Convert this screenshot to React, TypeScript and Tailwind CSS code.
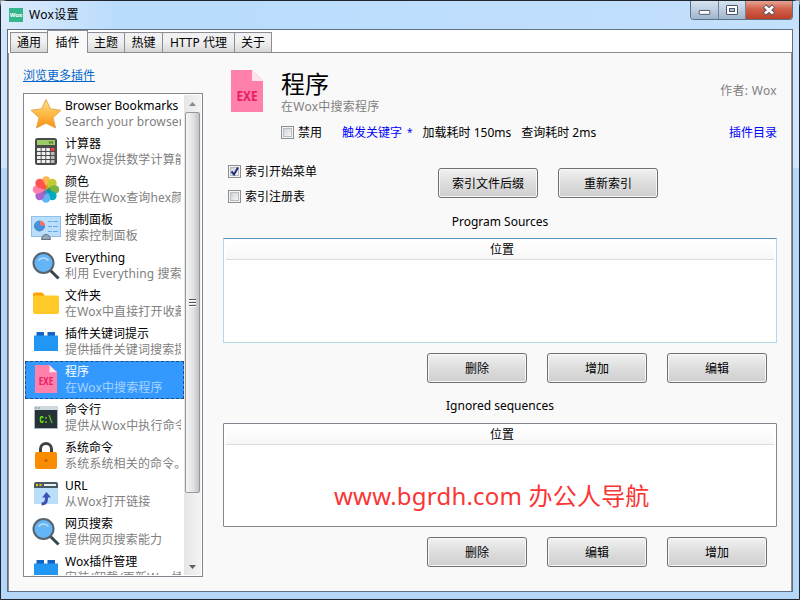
import clsx from "clsx";
import type { ReactNode } from "react";

const Star = () => (
  <svg viewBox="0 0 32 32" className="size-8">
    <defs>
      <linearGradient id="star" x1="0" y1="0" x2="0" y2="1">
        <stop offset="0" stopColor="#ffe08a" />
        <stop offset=".5" stopColor="#fdbb45" />
        <stop offset="1" stopColor="#f9900f" />
      </linearGradient>
    </defs>
    <path d="M16 1.5l4.4 9.3 10.600 1.500-8 7.300 2.600 10.400L16 25.200l-9.600 4.800L9 19.600 1 12.300l10.600-1.500z" fill="url(#star)" stroke="#e9a850" strokeWidth="1" strokeLinejoin="round" />
  </svg>
);

const Calculator = () => (
  <svg viewBox="0 0 32 32" className="size-8">
    <rect x="5" y="2" width="22" height="27" rx="2.500" fill="#4a4a4c" />
    <rect x="7" y="4" width="18" height="5" fill="#9ccc65" />
    <path d="M19 6.500h1.500M21.500 6.500H23" stroke="#33691e" strokeWidth="2" />
    {[12, 16, 20, 24].map((y) =>
      [7, 11.600, 16.200, 20.800].map((x) => (
        <rect key={`${x}-${y}`} x={x} y={y} width="3.700" height="3" rx=".5" fill={x > 20 ? (y === 12 ? "#f44336" : "#bdbdbd") : "#f0f0f0"} />
      ))
    )}
  </svg>
);

const petals = [
  { angle: 0, color: "#ffb74d" },
  { angle: 45, color: "#c0ca33" },
  { angle: 90, color: "#7cb342" },
  { angle: 135, color: "#00acc1" },
  { angle: 180, color: "#64b5f6" },
  { angle: 225, color: "#ab63d0" },
  { angle: 270, color: "#ff80ab" },
  { angle: 315, color: "#ff5252" },
];

const Colors = () => (
  <svg viewBox="0 0 32 32" className="size-8">
    {petals.map((p) => (
      <path key={p.angle} d="M16 15.500C13.500 12 11.700 9 11.700 6.500a4.300 4.300 0 0 1 8.600 0c0 2.500-1.800 5.500-4.300 9z" fill={p.color} transform={`rotate(${p.angle} 16 15.500)`} />
    ))}
    <path d="M16 15.500l4-2 1 2-1 3-4 2-3-2z" fill="#00796b" opacity=".4" />
    <path d="M16 15.500l-4-1 1-3 3-1 2 2z" fill="#f4511e" opacity=".5" />
  </svg>
);

const ControlPanel = () => (
  <svg viewBox="0 0 32 32" className="size-8">
    <rect x="1.500" y="4.500" width="29" height="20" fill="#bbdefb" stroke="#90bfe8" />
    <circle cx="9.500" cy="14" r="5" fill="#4591dc" stroke="#2b75bd" strokeWidth=".7" />
    <path d="M10 13.500V9a5 5 0 0 1 5 4.500z" fill="#ff6f60" />
    <path d="M18 9.500h4M18 14.500h4M18 19.500h4M23 9.500h5M23 14.500h5M23 19.500h5" stroke="#64a9e8" />
    <path d="M11.500 27.500c0-3 2-5 4.500-5s4.500 2 4.500 5z" fill="#9aa6b5" stroke="#60738a" />
  </svg>
);

const Magnifier = () => (
  <svg viewBox="0 0 32 32" className="size-8">
    <path d="M21 21l6.500 6.500" stroke="#37474f" strokeWidth="3" strokeLinecap="square" />
    <circle cx="13.500" cy="13" r="10" fill="#64b5f6" stroke="#57626b" strokeWidth="2" />
    <path d="M8.500 10.500c2.500-3.500 7.500-3.500 10 0" fill="none" stroke="#bbdefb" strokeWidth="1.500" />
  </svg>
);

const Folder = () => (
  <svg viewBox="0 0 32 32" className="size-8">
    <path d="M3 6.500q0-2 2-2h7l3 3v9H3z" fill="#ffa000" />
    <rect x="3" y="7.500" width="26" height="18.500" rx="2" fill="#ffca28" />
  </svg>
);

const Brick = () => (
  <svg viewBox="0 0 32 32" className="size-8">
    <path d="M6.500 6H14v4H6.500zM17.500 6h7.500v4h-7.500z" fill="#1565c0" />
    <path d="M4 9.500h24V25H4z" fill="#2196f3" />
  </svg>
);

const Exe = ({ className }: { className: string }) => (
  <svg viewBox="0 0 32 42" preserveAspectRatio="none" className={className}>
    <path d="M0 0h21l11 11v31H0z" fill="#ff80ab" />
    <path d="M21 0v11h11z" fill="#fce4ec" />
    <text x="16" y="30.500" textAnchor="middle" textLength="21" lengthAdjust="spacingAndGlyphs" fontSize="15" fontWeight="700" fontFamily="'Noto Sans', sans-serif" fill="#e91e63">
      EXE
    </text>
  </svg>
);

const Cmd = () => (
  <svg viewBox="0 0 32 32" className="size-8">
    <path d="M4.500 5h23v21.500h-23z" fill="#263238" stroke="#a9b8c0" />
    <path d="M4 4h24v4H4z" fill="#cfd8dc" />
    <path d="M5 6h2M8 6h2" stroke="#90a4ae" strokeWidth="1.500" />
    <text x="9.500" y="20.500" fontSize="10" fontWeight="700" textLength="13" lengthAdjust="spacingAndGlyphs" fontFamily="'Liberation Mono', monospace" fill="#76ff03">
      C:\
    </text>
  </svg>
);

const Lock = () => (
  <svg viewBox="0 0 32 32" className="size-8">
    <path d="M10.500 13V9a5.500 5.500 0 0 1 11 0v4" fill="none" stroke="#424242" strokeWidth="3" />
    <rect x="5" y="12" width="22" height="17" rx="2" fill="#fb8c00" />
    <circle cx="16" cy="20.500" r="1.500" fill="#c05f00" />
  </svg>
);

const UrlIcon = () => (
  <svg viewBox="0 0 32 32" className="size-8">
    <path d="M4 9h24v17H4z" fill="#bbdefb" />
    <path d="M4 10V6q0-2 2-2h20q2 0 2 2v4z" fill="#455a64" />
    <path d="M6 7h2M9.500 7h2" stroke="#ffc107" strokeWidth="2" />
    <path d="M14 6h12v2H14z" fill="#eceff1" />
    <path d="M11.500 26c3.500 0 5-2 5-5.500V18" fill="none" stroke="#3f51b5" strokeWidth="3" />
    <path d="M16.500 14l4.500 5.500h-9z" fill="#3f51b5" />
  </svg>
);

const plugins: { title: string; text: string; icon: ReactNode }[] = [
  { title: "Browser Bookmarks", text: "Search your browser", icon: <Star /> },
  { title: "计算器", text: "为Wox提供数学计算能", icon: <Calculator /> },
  { title: "颜色", text: "提供在Wox查询hex颜", icon: <Colors /> },
  { title: "控制面板", text: "搜索控制面板", icon: <ControlPanel /> },
  { title: "Everything", text: "利用 Everything 搜索", icon: <Magnifier /> },
  { title: "文件夹", text: "在Wox中直接打开收藏", icon: <Folder /> },
  { title: "插件关键词提示", text: "提供插件关键词搜索提", icon: <Brick /> },
  { title: "程序", text: "在Wox中搜索程序", icon: <Exe className="-mt-0.5 h-7 w-[22px]" /> },
  { title: "命令行", text: "提供从Wox中执行命令", icon: <Cmd /> },
  { title: "系统命令", text: "系统系统相关的命令。", icon: <Lock /> },
  { title: "URL", text: "从Wox打开链接", icon: <UrlIcon /> },
  { title: "网页搜索", text: "提供网页搜索能力", icon: <Magnifier /> },
  { title: "Wox插件管理", text: "安装/卸载/更新Wox插", icon: <Brick /> },
];

const tabs = [
  { label: "通用", width: "w-[37px]" },
  { label: "插件", width: "w-[41px]" },
  { label: "主题", width: "w-[37px]" },
  { label: "热键", width: "w-[38px]" },
  { label: "HTTP 代理", width: "w-[72px]" },
  { label: "关于", width: "w-[37px]" },
];

function TitleBar() {
  return (
    <header className="flex h-7 shrink-0 items-start bg-linear-to-r from-[#dcebfb] via-[#b9dcfd] via-15% to-[#c3e0fc] pl-2">
      <div className="mt-[7px] flex size-[14px] items-center justify-center bg-[#35b58c] text-[6px] font-bold tracking-tight text-white">Wox</div>
      <h1 className="mt-[5px] ml-[6px] text-[12px] leading-[18px] tracking-[0.3px]">Wox设置</h1>
      <div className="mr-[6px] ml-auto flex h-[19px] overflow-hidden rounded-b-[4px] border border-t-0 border-[#5c7087]">
        <button className="flex w-7 items-center justify-center border-r border-[#6e8299] bg-linear-to-b from-[#d5e2f0] via-[#c0d0e2] via-45% to-[#9fb5cc]">
          <svg viewBox="0 0 28 18" className="h-[18px] w-7">
            <rect x="8.500" y="9.500" width="11" height="4" rx=".5" fill="#fff" stroke="#4d5666" />
          </svg>
        </button>
        <button className="flex w-[27px] items-center justify-center border-r border-[#6e8299] bg-linear-to-b from-[#d5e2f0] via-[#c0d0e2] via-45% to-[#9fb5cc]">
          <svg viewBox="0 0 26 18" className="h-[18px] w-[26px]">
            <rect x="7.500" y="4.500" width="11" height="9" rx=".5" fill="#fff" stroke="#4d5666" />
            <rect x="10.500" y="7.500" width="5" height="3" fill="#a9bdd3" stroke="#4d5666" />
          </svg>
        </button>
        <button className="flex w-[46px] items-center justify-center bg-linear-to-b from-[#e5a494] via-[#d1604a] via-45% to-[#bd3f28]">
          <svg viewBox="0 0 46 18" className="h-[18px] w-[46px]">
            <path d="M18.500 5l9 8M27.500 5l-9 8" stroke="#51535f" strokeWidth="4.600" />
            <path d="M19 5.500l8 7M27 5.500l-8 7" stroke="#fff" strokeWidth="2.800" />
          </svg>
        </button>
      </div>
    </header>
  );
}

function Button({ children }: { children: ReactNode }) {
  return (
    <button className="h-[30px] w-[100px] rounded-[3px] border border-[#707070] bg-linear-to-b from-[#f2f2f2] from-0% via-[#dddddd] via-50% to-[#cfcfcf] pt-px text-center leading-[28px] shadow-[inset_0_0_0_1px_#f8f8f8]">
      {children}
    </button>
  );
}

function CheckBox({ label, checked = false }: { label: string; checked?: boolean }) {
  return (
    <label className="flex h-4 items-center">
      <span className="flex size-[13px] items-center justify-center border border-[#8e8f8f] bg-[#f4f4f4]">
        <span className="size-[9px] border border-[#b8bdc4] bg-linear-to-br from-[#cfd3d8] to-[#f6f6f6]">
          {checked && (
            <svg viewBox="0 0 9 9" className="-mt-px -ml-px size-[9px] overflow-visible">
              <path d="M1.500 4.500L4 7.500 8 .500" fill="none" stroke="#22307f" strokeWidth="2" />
            </svg>
          )}
        </span>
      </span>
      <span className="ml-1 pt-0.5 leading-4">{label}</span>
    </label>
  );
}

function Grid({ className }: { className: string }) {
  return (
    <div className={clsx("border bg-white px-[2px] pt-[2px]", className)}>
      <div className="h-[19px] border-b border-[#dcdcdc] bg-linear-to-b from-white to-[#f7f7f8] pl-1 text-center leading-[18px]">位置</div>
    </div>
  );
}

function PluginList() {
  return (
    <div className="flex h-[484px] w-[180px] border border-[#828790] bg-white p-px">
      <ul className="h-[480px] w-40 overflow-hidden">
        {plugins.map((p, i) => (
          <li key={p.title} className={clsx("flex h-[38px] items-center", i === 7 && "bg-[#3399ff] text-white outline-1 -outline-offset-1 outline-dashed outline-[#1a4f88]")}>
            <div className="ml-[5px] flex size-8 shrink-0 items-center justify-center">{p.icon}</div>
            <div className="ml-[3px] w-[116px] overflow-hidden whitespace-nowrap">
              <div className="h-4 leading-4">{p.title}</div>
              <div className={clsx("h-4 leading-4 tracking-[0.15px]", i === 7 ? "text-[#a9d3ff]" : "text-[#808080]")}>{p.text}</div>
            </div>
          </li>
        ))}
      </ul>
      <div className="flex w-[17px] flex-col bg-linear-to-r from-[#e6e6e6] to-[#f3f3f3]">
        <div className="flex h-[17px] items-center justify-center">
          <svg viewBox="0 0 7 4" className="h-1 w-[7px]"><path d="M0 4l3.500-4L7 4z" fill="#888" /></svg>
        </div>
        <div className="mx-px flex h-[381px] flex-col items-center justify-center gap-px rounded-[2px] border border-[#979797] bg-linear-to-r from-[#f5f5f5] via-[#e4e5e7] via-50% to-[#c2c3c8]">
          <i className="h-0.5 w-[7px] border-b border-white bg-[#555]" />
          <i className="h-0.5 w-[7px] border-b border-white bg-[#555]" />
          <i className="h-0.5 w-[7px] border-b border-white bg-[#555]" />
        </div>
        <div className="mt-auto flex h-[17px] items-center justify-center">
          <svg viewBox="0 0 7 4" className="h-1 w-[7px]"><path d="M0 0h7L3.500 4z" fill="#606060" /></svg>
        </div>
      </div>
    </div>
  );
}

function PluginDetails() {
  return (
    <main className="ml-5 w-[554px]">
      <div className="flex h-[90px] pl-2">
        <Exe className="mt-[17px] h-[42px] w-8" />
        <div className="ml-[18px] flex-1">
          <div className="mt-[15px] flex h-[47px] justify-between">
            <div>
              <h2 className="h-[31px] text-2xl leading-[32px]">程序</h2>
              <p className="h-4 leading-4 tracking-[0.25px] text-[#808080]">在Wox中搜索程序</p>
            </div>
            <span className="mt-[15px] leading-4 tracking-[0.3px] text-[#808080]">作者: Wox</span>
          </div>
          <div className="mt-[9px] flex h-4 leading-4 whitespace-nowrap">
            <CheckBox label="禁用" />
            <a className="ml-5 pt-px text-[#0000ff]">触发关键字</a>
            <a className="ml-[5px] text-[10px] text-[#0000ff]">*</a>
            <span className="ml-[10px] pt-px">加载耗时 150ms</span>
            <span className="ml-[10px] pt-px">查询耗时 2ms</span>
            <a className="ml-auto pt-px text-[#0000ff]">插件目录</a>
          </div>
        </div>
      </div>
      <div className="mt-[20px] flex h-[35px] pl-[5px]">
        <div className="flex w-[210px] flex-col gap-[9px]">
          <CheckBox label="索引开始菜单" checked />
          <CheckBox label="索引注册表" />
        </div>
        <div className="mt-[5px] flex gap-5">
          <Button>索引文件后缀</Button>
          <Button>重新索引</Button>
        </div>
      </div>
      <h3 className="mt-3 h-6 text-center leading-6">Program Sources</h3>
      <Grid className="mt-1 h-[105px] border-[#b5d8ea] border-t-[#5794bf]" />
      <div className="mt-[10px] flex justify-end gap-5 pr-[10px]">
        <Button>删除</Button>
        <Button>增加</Button>
        <Button>编辑</Button>
      </div>
      <h3 className="mt-[11px] h-6 text-center leading-6">Ignored sequences</h3>
      <Grid className="mt-[5px] h-[104px] rounded-[1px] border-[#828790]" />
      <div className="mt-[10px] flex justify-end gap-5 pr-[10px]">
        <Button>删除</Button>
        <Button>编辑</Button>
        <Button>增加</Button>
      </div>
    </main>
  );
}

export default function App() {
  return (
    <div className="relative h-[600px] w-[800px] overflow-hidden bg-[#8a9096] font-['Noto_Sans','Noto_Sans_CJK_SC',sans-serif] text-[12px] text-black">
      <div className="flex h-[600px] flex-col rounded-t-[7px] border border-[#20262e] bg-linear-to-b from-[#cfe5fb] from-28% to-[#b5d7fa] to-28%">
        <TitleBar />
        <div className="mx-[6px] flex h-[563px] flex-col border border-[#5f7085] bg-white">
          <nav className="flex h-[23px] shrink-0 items-end pl-[2px]">
            {tabs.map((t, i) => (
              <div
                key={t.label}
                className={clsx(
                  "shrink-0 border-[#8c8e94] text-center whitespace-nowrap",
                  t.width,
                  i === 1
                    ? "h-[23px] border-t border-r border-l bg-[#f9f9f9] leading-[23px]"
                    : "h-[21px] border-t border-r border-b bg-linear-to-b from-[#f1f1f1] from-45% to-[#d8d8d8] leading-[20px]",
                  i === 0 && "border-r-0 border-l"
                )}
              >
                {t.label}
              </div>
            ))}
            <div className="h-px flex-1 bg-[#8c8e94]" />
          </nav>
          <div className="flex flex-1 border-r border-l border-[#8c8e94] bg-[#f9f9f9] pl-[14px]">
            <aside className="pt-[15px]">
              <a className="block h-[25px] leading-4 text-[#0066cc] underline">浏览更多插件</a>
              <PluginList />
            </aside>
            <PluginDetails />
          </div>
        </div>
      </div>
      {/* site mark over the lower grid */}
      <div className="absolute top-[480px] left-[334px] text-2xl leading-8 tracking-[0.2px] whitespace-nowrap text-[#fb3535]">www.bgrdh.com 办公人导航</div>
    </div>
  );
}
